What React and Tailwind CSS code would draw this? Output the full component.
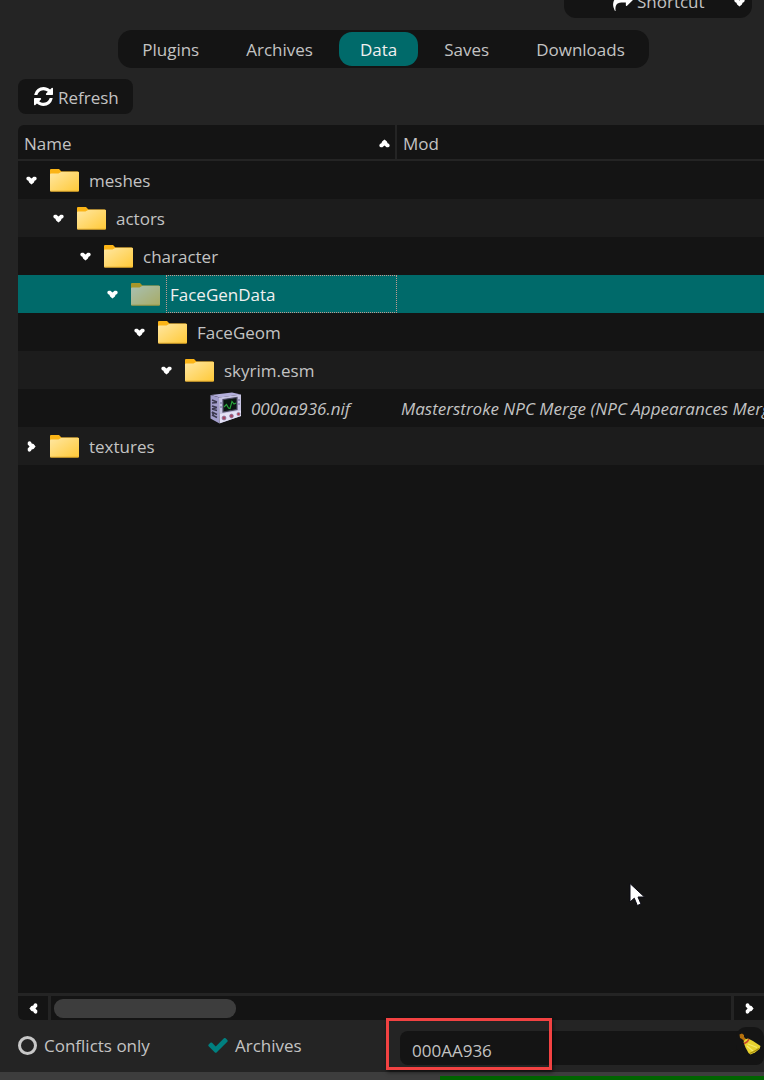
import React, { useState } from "react";

const TABS = ["Plugins", "Archives", "Data", "Saves", "Downloads"];

const ROWS = [
  { name: "meshes", level: 0, open: true },
  { name: "actors", level: 1, open: true },
  { name: "character", level: 2, open: true },
  { name: "FaceGenData", level: 3, open: true },
  { name: "FaceGeom", level: 4, open: true },
  { name: "skyrim.esm", level: 5, open: true },
  {
    name: "000aa936.nif",
    level: 6,
    file: true,
    mod: "Masterstroke NPC Merge (NPC Appearances Merged)",
  },
  { name: "textures", level: 0, open: false },
];

const INDENT = 27;

function Arrow({ className = "" }) {
  return (
    <svg viewBox="0 0 11 9" aria-hidden="true" className={`h-[9px] w-[11px] shrink-0 ${className}`}>
      <path
        d="M0.3 2.4Q0.4 0.8 1.8 0.7L3.4 0.7L5.5 2.6L7.6 0.7L9.2 0.7Q10.6 0.8 10.7 2.4Q10.6 4.3 8.6 4.7L7.9 6.6L5.5 8.6L3.1 6.6L2.4 4.7Q0.4 4.3 0.3 2.4Z"
        fill="#fff"
      />
    </svg>
  );
}

function CheckIcon({ className = "" }) {
  return (
    <svg viewBox="112 256 1568 1280" aria-hidden="true" fill="currentColor" className={className}>
      <path d="M1671 566q0 40-28 68l-724 724-136 136q-28 28-68 28t-68-28l-136-136-362-362q-28-28-28-68t28-68l136-136q28-28 68-28t68 28l294 295 656-657q28-28 68-28t68 28l136 136q28 28 28 68z" />
    </svg>
  );
}

function ShareIcon({ className = "" }) {
  return (
    <svg viewBox="0 128 1792 1536" aria-hidden="true" fill="currentColor" className={className}>
      <path d="M1792 640q0 26-19 45l-512 512q-19 19-45 19t-45-19-19-45v-256h-224q-98 0-175.5 6t-154 21.5-133 42.5-105.5 69.5-80 101-48.5 138.5-17.5 181q0 55 5 123 0 6 2.5 23.5t2.5 26.5q0 15-8.5 25t-23.5 10q-16 0-28-17-7-9-13-22t-13.5-30-10.5-24q-127-285-127-451 0-199 53-333 162-403 875-403h224v-256q0-26 19-45t45-19 45 19l512 512q19 19 19 45z" />
    </svg>
  );
}

function RefreshIcon({ className = "" }) {
  return (
    <svg viewBox="128 128 1536 1536" aria-hidden="true" fill="currentColor" className={className}>
      <path d="M1639 1056q0 5-1 7-64 268-268 434.5t-478 166.5q-146 0-282.5-55t-243.5-157l-129 129q-19 19-45 19t-45-19-19-45v-448q0-26 19-45t45-19h448q26 0 45 19t19 45-19 45l-137 137q71 66 161 102t187 36q134 0 250-65t186-179q11-17 53-117 8-23 30-23h192q13 0 22.5 9.5t9.5 22.5zm25-800v448q0 26-19 45t-45 19h-448q-26 0-45-19t-19-45 19-45l138-138q-148-137-349-137-134 0-250 65t-186 179q-11 17-53 117-8 23-30 23h-199q-13 0-22.5-9.5t-9.5-22.5v-7q65-268 270-434.5t480-166.5q146 0 284 55.5t245 156.5l130-129q19-19 45-19t45 19 19 45z" />
    </svg>
  );
}

function FolderIcon({ selected }) {
  return (
    <svg viewBox="0 0 29 24" aria-hidden="true" className={`h-[24px] w-[29px] ${selected ? "opacity-70" : ""}`}>
      <defs>
        <linearGradient id="folderFront" x1="0" y1="0" x2="1" y2="1">
          <stop offset="0" stopColor="#ffe7a2" />
          <stop offset="1" stopColor="#ffc937" />
        </linearGradient>
        <linearGradient id="folderDim" x1="0" y1="0" x2="1" y2="1">
          <stop offset="0" stopColor="#efe5d2" />
          <stop offset="1" stopColor="#efc763" />
        </linearGradient>
      </defs>
      <path d="M0 2Q0 1 1 1H9L11.5 3.5H27.5Q29 3.5 29 5V12H0Z" fill={selected ? "#eba90f" : "#fbb416"} />
      <path
        d="M0 6.5Q0 5.5 1 5.5H8.5L11.5 3.8H28Q29 3.8 29 4.8V22.5Q29 23.5 28 23.5H1Q0 23.5 0 22.5Z"
        fill={selected ? "url(#folderDim)" : "url(#folderFront)"}
      />
      <path d="M0.5 23.2H28.5" stroke="#d9a01f" strokeWidth="0.8" />
    </svg>
  );
}

function NifIcon() {
  return (
    <svg viewBox="0 0 32 32" aria-hidden="true" className="h-[32px] w-[32px]">
      <path d="M1 3L22 0.5L31 2.5L10 5.5Z" fill="#b3aedb" />
      <path d="M0.5 3L9.5 5.5L9.5 31.5L0.5 26.5Z" fill="#a29dcb" />
      <path d="M9 5.5L31 2.5V24L9.5 31.5Z" fill="#c6c3e2" />
      <path
        d="M2 8L7 10M2 11L7 10.5M2 14L7 15.5M2 17L7 18.5M2 17L7 15.5M2 20L7 22.5M2 23L7 25.5M2 20L4 24"
        stroke="#3c3950"
        strokeWidth="1.5"
      />
      <path d="M13 7.5L27 5.5V17.5L13 20Z" fill="#0a1510" stroke="#4c4962" strokeWidth="1.2" />
      <path d="M14 15L16.5 12.5L18.5 16L20 16.5L22 9.5L24 12L26 11" fill="none" stroke="#2aa83c" strokeWidth="1.1" />
      <path d="M10 22L31 18.5V24L10 31Z" fill="#e4e1f6" />
      <path d="M29 7V9M29 11V13M11 10V12M11 14V16" stroke="#77739c" strokeWidth="1.2" />
      <circle cx="14" cy="26" r="2" fill="#a74663" stroke="#817da8" strokeWidth="0.7" />
      <circle cx="21.5" cy="24" r="1.9" fill="#a74663" stroke="#817da8" strokeWidth="0.7" />
      <circle cx="28.5" cy="22" r="1.6" fill="#b83b4e" stroke="#817da8" strokeWidth="0.7" />
    </svg>
  );
}

function BroomIcon() {
  return (
    <svg viewBox="0 0 22 22" aria-hidden="true" className="h-[22px] w-[22px]">
      <path d="M0.5 1.5L3 0.5L5 2L5 4L8 7L6 9L3 6L1 5Z" fill="#b5700c" />
      <path d="M6 6.5L9 5.5L14 8L21.5 13L20.5 16L16 19.5L11.5 21.5L9.5 20L6.5 14.5L4.5 9Z" fill="#e8d22f" />
      <path d="M9 11L18 14.5M8 13L14 18" stroke="#f6ea6c" strokeWidth="1.2" />
      <path d="M10.5 20.5L15 18.5L20 15.5" stroke="#a58b0c" strokeWidth="1.2" fill="none" />
      <path d="M5 10.5Q8.5 9.5 10 6" stroke="#c8452c" strokeWidth="1.6" fill="none" />
    </svg>
  );
}

function Pointer() {
  return (
    <svg viewBox="0 0 18 26" aria-hidden="true" className="absolute top-[757px] left-[611px] h-[26px] w-[18px]">
      <path d="M1 1.5V20L5.3 16.2L8.3 23.5L12 22L9 15H15.5Z" fill="#fff" stroke="#0a0a14" strokeWidth="1" />
    </svg>
  );
}

function TreeRow({ row, selected, onSelect }) {
  const italic = row.file ? "italic" : "";
  const tone = selected ? "bg-[#006a6a] text-[#f0f0f0]" : "odd:bg-[#141414] even:bg-[#1c1c1c]";
  return (
    <tr className={tone} aria-selected={selected} aria-level={row.level + 1} onClick={onSelect}>
      <td className="h-[38px] p-0">
        <div className="flex h-[38px] items-center" style={{ paddingLeft: 8 + row.level * INDENT }}>
          <span className="flex w-[11px] shrink-0 justify-center">
            {!row.file && <Arrow className={row.open ? "" : "-rotate-90"} />}
          </span>
          <span className="ml-[11px] flex w-[32px] shrink-0 justify-center">
            {row.file ? <NifIcon /> : <FolderIcon selected={selected} />}
          </span>
          <span
            className={`ml-[5px] flex h-full min-w-0 flex-1 items-center border border-dotted pt-[2px] pl-[3px] ${
              selected ? "border-[#c09a92]" : "border-transparent"
            } ${italic}`}
          >
            {row.name}
          </span>
        </div>
      </td>
      <td className={`overflow-hidden p-0 pt-[2px] pl-[4px] whitespace-nowrap ${italic}`}>{row.mod}</td>
    </tr>
  );
}

export default function App() {
  const [tab, setTab] = useState("Data");
  const [selected, setSelected] = useState("FaceGenData");
  const [filter, setFilter] = useState("000AA936");
  const [conflicts, setConflicts] = useState(false);
  const [archives, setArchives] = useState(true);

  return (
    <div className="flex min-h-screen flex-col overflow-hidden bg-[#242424] font-['Open_Sans','Noto_Sans',sans-serif] text-[17px] leading-[24px] text-[#c3c3c3]">
      <div className="flex h-[18px] items-end justify-end overflow-hidden pr-[12px]">
        <button
          type="button"
          className="flex h-[34px] w-[188px] shrink-0 items-center rounded-[12px] bg-[#141414] pt-[2px] pr-[7px] pl-[49px]"
        >
          <ShareIcon className="h-[17px] w-[20px] text-white" />
          <span className="ml-[4px] flex-1 text-left">Shortcut</span>
          <Arrow />
        </button>
      </div>

      <div className="mt-[12px] flex justify-center pl-[3px]">
        <div role="tablist" className="flex h-[38px] items-center gap-[5px] rounded-[14px] bg-[#141414] px-[3px]">
          {TABS.map((t) => (
            <button
              key={t}
              type="button"
              role="tab"
              aria-selected={t === tab}
              onClick={() => setTab(t)}
              className={`h-[34px] rounded-[13px] px-[21px] pt-[1px] ${t === tab ? "bg-[#006a6a] text-[#f0f0f0]" : ""}`}
            >
              {t}
            </button>
          ))}
        </div>
      </div>

      <main className="flex flex-1 flex-col pl-[18px]">
        <div className="mt-[11px] flex">
          <button
            type="button"
            className="flex h-[35px] items-center rounded-[8px] bg-[#141414] pr-[14px] pl-[16px]"
          >
            <RefreshIcon className="size-[19px] text-white" />
            <span className="ml-[5px] pt-[2px]">Refresh</span>
          </button>
        </div>

        <div className="relative mt-[11px] flex-1 overflow-hidden rounded-tl-[6px] bg-[#141414]">
          <table className="w-full table-fixed border-separate border-spacing-0">
            <colgroup>
              <col className="w-[379px]" />
              <col />
            </colgroup>
            <thead>
              <tr>
                <th
                  scope="col"
                  aria-sort="ascending"
                  className="h-[36px] border-r-2 border-b-2 border-[#242424] p-0 text-left font-normal"
                >
                  <div className="flex items-center justify-between pt-[3px] pr-[5px] pl-[6px]">
                    Name
                    <Arrow className="rotate-180" />
                  </div>
                </th>
                <th scope="col" className="h-[36px] border-b-2 border-[#242424] p-0 text-left font-normal">
                  <div className="pt-[3px] pl-[6px]">Mod</div>
                </th>
              </tr>
            </thead>
            <tbody>
              {ROWS.map((row) => (
                <TreeRow
                  key={row.name}
                  row={row}
                  selected={row.name === selected}
                  onSelect={() => setSelected(row.name)}
                />
              ))}
            </tbody>
          </table>
          <Pointer />
        </div>

        <div className="mt-[3px] flex h-[24px] gap-[3px]">
          <button
            type="button"
            aria-label="Scroll left"
            className="flex w-[30px] items-center justify-center rounded-bl-[6px] bg-[#141414]"
          >
            <Arrow className="rotate-90" />
          </button>
          <div className="flex flex-1 items-center bg-[#141414] px-[3px]">
            <div className="h-[19px] w-[182px] rounded-[9px] bg-[#3d3d3d]" />
          </div>
          <button
            type="button"
            aria-label="Scroll right"
            className="flex w-[30px] items-center justify-center bg-[#141414]"
          >
            <Arrow className="-rotate-90" />
          </button>
        </div>

        <div className="flex items-start pt-[11px] pb-[7px]">
          <label className="flex h-[28px] w-[190px] items-center">
            <input
              type="checkbox"
              checked={conflicts}
              onChange={(e) => setConflicts(e.target.checked)}
              className="size-[19px] appearance-none rounded-full border-[3px] border-[#c8c8c8] checked:bg-[#008080]"
            />
            <span className="ml-[7px] pt-[1px]">Conflicts only</span>
          </label>
          <label className="flex h-[28px] w-[192px] items-center">
            <span className="grid size-[20px] place-items-center">
              <input
                type="checkbox"
                checked={archives}
                onChange={(e) => setArchives(e.target.checked)}
                className="col-start-1 row-start-1 size-[19px] appearance-none rounded-full border-[3px] border-[#c8c8c8] checked:border-transparent"
              />
              {archives && (
                <CheckIcon className="pointer-events-none col-start-1 row-start-1 h-[16px] w-[20px] text-[#008080]" />
              )}
            </span>
            <span className="ml-[7px] pt-[1px]">Archives</span>
          </label>
          <div className="relative flex-1">
            <input
              type="text"
              aria-label="Filter"
              value={filter}
              onChange={(e) => setFilter(e.target.value)}
              className="block h-[34px] w-full rounded-[8px] bg-[#141414] pt-[4px] pr-[32px] pl-[12px] outline-none"
            />
            <button
              type="button"
              aria-label="Clear filter"
              onClick={() => setFilter("")}
              className="absolute -top-[4px] right-0 flex size-[28px] items-center justify-center rounded-[10px] bg-[#141414] pt-[6px]"
            >
              <BroomIcon />
            </button>
            <div className="pointer-events-none absolute -top-[13px] -left-[14px] h-[52px] w-[166px] border-[3px] border-[#f24242] shadow-[1px_2px_4px_rgba(0,0,0,0.6)]" />
          </div>
        </div>
      </main>

      <div className="flex h-[8px] items-end bg-[#3d3d3d] pl-[440px]">
        <div className="h-[4px] flex-1 bg-[#006400]" />
      </div>
    </div>
  );
}
